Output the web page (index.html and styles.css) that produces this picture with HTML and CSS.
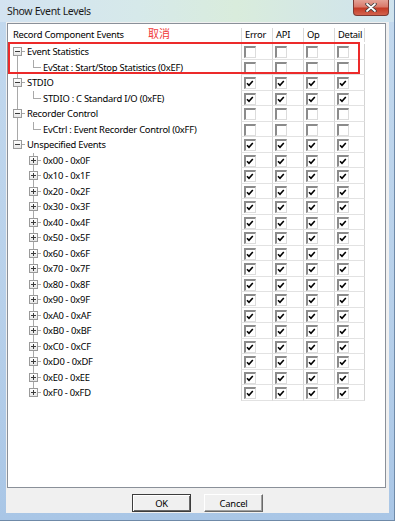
FILE: index.html
```html
<!DOCTYPE html>
<html>
<head>
<meta charset="utf-8">
<link rel="stylesheet" href="styles.css">
</head>
<body>
<div class="window">
  <div class="titlebar">
    <span class="title">Show Event Levels</span>
    <span class="close"><svg width="12" height="9" viewBox="0 0 12 9"><path d="M2 1 L10 8 M10 1 L2 8" stroke="#3a3a3a" stroke-width="3.4" stroke-linecap="round"/><path d="M2 1 L10 8 M10 1 L2 8" stroke="#fff" stroke-width="1.8" stroke-linecap="round"/></svg></span>
  </div>
  <div class="client">
    <div class="list">
      <div class="head">
        <div class="th-tree">Record Component Events</div>
        <div class="th">Error</div>
        <div class="th">API</div>
        <div class="th">Op</div>
        <div class="th th-last">Detail</div>
      </div>
      <div id="rows"></div>
    </div>
    <div class="footer">
      <button class="btn btn-default">OK</button>
      <button class="btn">Cancel</button>
    </div>
  </div>
  <div class="mark"></div>
  <div class="note">取消</div>
</div>
<script src="app.js"></script>
</body>
</html>
```
FILE: app.js
```js
var rows = [
  {lvl:1, label:'Event Statistics', g1:'vb', on:false},
  {lvl:2, label:'EvStat : Start/Stop Statistics (0xEF)', g1:'vf', g2:'vt', on:false},
  {lvl:1, label:'STDIO', g1:'vf', on:true},
  {lvl:2, label:'STDIO : C Standard I/O (0xFE)', g1:'vf', g2:'vt', on:true},
  {lvl:1, label:'Recorder Control', g1:'vf', on:false},
  {lvl:2, label:'EvCtrl : Event Recorder Control (0xFF)', g1:'vf', g2:'vt', on:false},
  {lvl:1, label:'Unspecified Events', g1:'vt', on:true}
];
var hex = '0123456789ABCDEF';
for (var i = 0; i < 16; i++) {
  var a = '0x' + hex[i] + '0';
  var b = '0x' + hex[i] + 'F';
  if (i === 14) b = '0xEE';
  if (i === 15) b = '0xFD';
  rows.push({lvl:2, label:a + ' - ' + b, g1:'', g2: i === 15 ? 'vt' : 'vf', plus:true, on:true});
}
var check = '<svg class="tick" width="8" height="7" viewBox="0 0 8 7"><path d="M1 3.2 L3 5.3 L6.8 1" fill="none" stroke="#000" stroke-width="1.6"/></svg>';
var html = '';
rows.forEach(function (r) {
  html += '<div class="row"><div class="tree">';
  html += '<span class="g ' + r.g1 + (r.lvl === 1 ? ' h' : '') + '">' + (r.lvl === 1 ? '<span class="box minus"></span>' : '') + '</span>';
  if (r.lvl === 2) {
    html += '<span class="g ' + r.g2 + ' h">' + (r.plus ? '<span class="box plus"></span>' : '') + '</span>';
  }
  html += '<span class="label">' + r.label + '</span></div>';
  for (var c = 0; c < 4; c++) {
    html += '<div class="cell' + (c === 3 ? ' cell-last' : '') + '"><span class="cb">' + (r.on ? check : '') + '</span></div>';
  }
  html += '</div>';
});
document.getElementById('rows').innerHTML = html;
```
FILE: styles.css
```css
html, body {
  margin: 0;
  padding: 0;
}
body {
  width: 395px;
  height: 521px;
  overflow: hidden;
  font-family: "Noto Sans", "Open Sans", sans-serif;
  color: #000;
}
.window {
  position: relative;
  width: 395px;
  height: 521px;
  box-sizing: border-box;
  display: flex;
  flex-direction: column;
  background: linear-gradient(to bottom, #c3d9ee 0%, #b7d0ea 60%, #a9c6e6 100%);
  border-right: 1px solid #6f8aa8;
  border-bottom: 1px solid #6f8aa8;
}
.titlebar {
  height: 22px;
  flex: none;
  display: flex;
  align-items: flex-start;
  background: linear-gradient(to right, #d3e3f1 0%, #d6e9ea 35%, #d9ecdc 60%, #cfe3ee 100%);
}
.title {
  margin: 4px 0 0 7px;
  font-size: 10.5px;
  letter-spacing: -0.35px;
  line-height: 14px;
  color: #1a1a1a;
}
.close {
  margin-left: auto;
  margin-right: 5px;
  width: 36px;
  height: 16px;
  box-sizing: border-box;
  border: 1px solid #7d3a33;
  border-top: none;
  border-radius: 0 0 4px 4px;
  background: linear-gradient(to bottom, #e4a296 0%, #d97a6b 45%, #c43b26 55%, #d2634e 100%);
  display: flex;
  align-items: center;
  justify-content: center;
}
.client {
  flex: 1;
  margin: 0 5px 7px 6px;
  padding: 1px 3px 0 1px;
  background: #f0f0f0;
  display: flex;
  flex-direction: column;
}
.list {
  height: 465px;
  flex: none;
  box-sizing: border-box;
  border: 1px solid #8a9099;
  background: #fff;
}
.head {
  height: 20px;
  display: flex;
  font-size: 9.4px;
  letter-spacing: -0.25px;
}
.th-tree {
  width: 233px;
  box-sizing: border-box;
  padding-left: 5px;
  margin-top: 4px;
  height: 14px;
  line-height: 14px;
}
.th {
  width: 31px;
  box-sizing: border-box;
  border-left: 1px solid #dadada;
  padding-left: 3px;
  margin-top: 4px;
  height: 14px;
  line-height: 14px;
}
.th-last {
  border-right: 1px solid #dadada;
}
.row {
  height: 15.5px;
  display: flex;
  font-size: 9.4px;
  letter-spacing: -0.25px;
}
.tree {
  width: 233px;
  box-sizing: border-box;
  padding-left: 1px;
  display: flex;
}
.g {
  width: 16px;
  flex: none;
  display: flex;
  align-items: center;
  background-repeat: no-repeat;
}
.g.vf { background-image: linear-gradient(#a9a9a9, #a9a9a9); background-position: 8px 0; background-size: 1px 100%; }
.g.vt { background-image: linear-gradient(#a9a9a9, #a9a9a9); background-position: 8px 0; background-size: 1px 50%; }
.g.vb { background-image: linear-gradient(#a9a9a9, #a9a9a9); background-position: 8px 100%; background-size: 1px 50%; }
.g.h.vf, .g.h.vt, .g.h.vb {
  background-image: linear-gradient(#a9a9a9, #a9a9a9), linear-gradient(#a9a9a9, #a9a9a9);
}
.g.h.vf { background-position: 8px 0, 8px 50%; background-size: 1px 100%, 8px 1px; }
.g.h.vt { background-position: 8px 0, 8px 50%; background-size: 1px 50%, 8px 1px; }
.g.h.vb { background-position: 8px 100%, 8px 50%; background-size: 1px 50%, 8px 1px; }
.box {
  position: relative;
  width: 9px;
  height: 9px;
  margin-left: 4px;
  box-sizing: border-box;
  border: 1px solid #9a9a9a;
  background: linear-gradient(to bottom, #ffffff, #e6e6e6);
}
.box::before {
  content: "";
  position: absolute;
  left: 1px;
  top: 3px;
  width: 5px;
  height: 1px;
  background: #3b3b3b;
}
.box.plus::after {
  content: "";
  position: absolute;
  left: 3px;
  top: 1px;
  width: 1px;
  height: 5px;
  background: #3b3b3b;
}
.label {
  margin-left: 2px;
  line-height: 15.5px;
  white-space: nowrap;
}
.cell {
  width: 31px;
  flex: none;
  box-sizing: border-box;
  border-left: 1px solid #d4d4d4;
  border-bottom: 1px solid #e2e2e2;
  padding: 2px 0 0 2px;
}
.cell-last {
  border-right: 1px solid #d4d4d4;
}
.cb {
  display: block;
  width: 12px;
  height: 12px;
  box-sizing: border-box;
  border-top: 2px solid #8b8b8b;
  border-left: 2px solid #8b8b8b;
  border-right: 1px solid #dcdcdc;
  border-bottom: 1px solid #dcdcdc;
  background: #fff;
}
.tick {
  display: block;
  margin: 1px 0 0 0;
}
.footer {
  flex: 1;
  display: flex;
  justify-content: center;
  gap: 13px;
  padding: 6px 0 0 2px;
}
.btn {
  width: 59px;
  height: 18px;
  box-sizing: border-box;
  margin: 0;
  padding: 0;
  font-family: "Noto Sans", "Open Sans", sans-serif;
  font-size: 9.4px;
  letter-spacing: -0.2px;
  color: #000;
  background: #f0f0f0;
  border-top: 1px solid #ffffff;
  border-left: 1px solid #ffffff;
  border-right: 1px solid #696969;
  border-bottom: 1px solid #696969;
  box-shadow: inset -1px -1px 0 #a0a0a0;
}
.btn-default {
  border: 1px solid #3c3c3c;
  box-shadow: inset 1px 1px 0 #ffffff, inset -1px -1px 0 #696969;
}
.mark {
  position: absolute;
  left: 8px;
  top: 42px;
  width: 352px;
  height: 32px;
  box-sizing: border-box;
  border: 2px solid #ec2a2a;
}
.note {
  position: absolute;
  left: 148px;
  top: 25px;
  font-family: "Noto Sans CJK SC", sans-serif;
  font-size: 11px;
  line-height: 16px;
  color: #f03a3a;
}
```
